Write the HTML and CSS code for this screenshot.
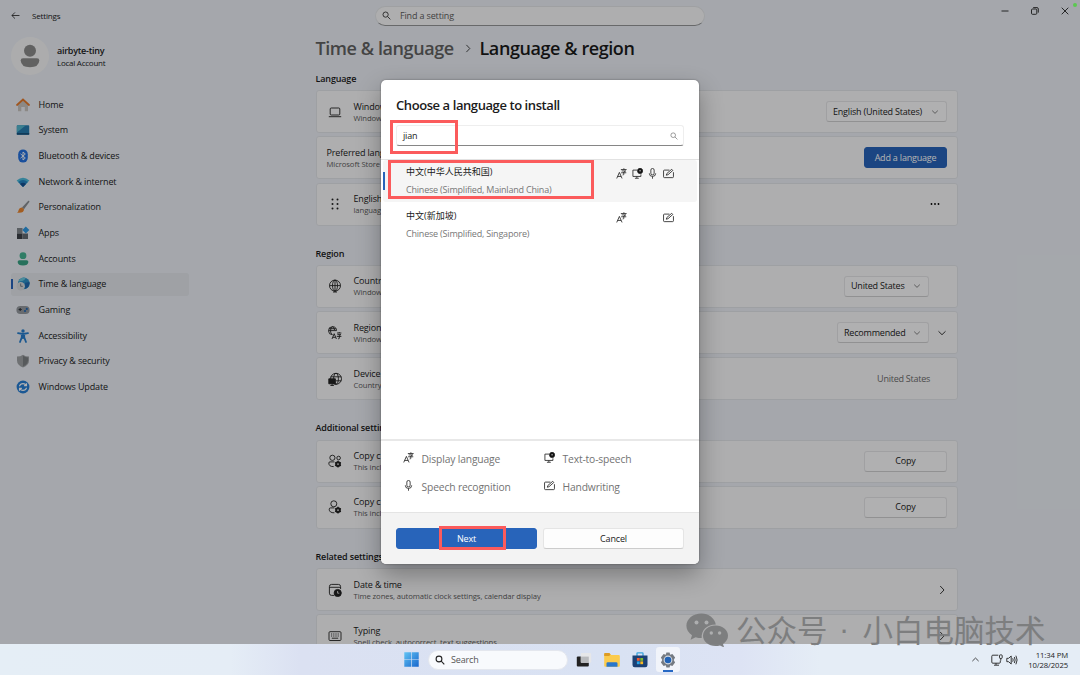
FILE: index.html
```html
<!DOCTYPE html>
<html lang="en">
<head>
  <meta charset="UTF-8">
  <title>Settings</title>
  <link rel="stylesheet" href="styles.css">
</head>
<body>
  <!-- shared icons -->
  <svg class="defs" width="0" height="0">
    <symbol id="i-search" viewBox="0 0 10 10"><circle cx="4" cy="4" r="2.9"/><path d="M6.2 6.2 9.3 9.3"/></symbol>
    <symbol id="i-down" viewBox="0 0 10 10"><path d="M1.5 3.3 5 6.7 8.5 3.3"/></symbol>
    <symbol id="i-right" viewBox="0 0 10 10"><path d="M3.2 1 7 5 3.2 9"/></symbol>
    <symbol id="i-display" viewBox="0 0 12 12"><path d="M.8 11.4 3.7 4.8 6.6 11.4M1.8 9.2H5.6M5.3 1.7H11.6M8.6.3V1.7M6.2 3.2H10.6L8.5 4.5V6.9Q8.5 7.7 7.2 7.6M5.6 5.2H11.2"/></symbol>
    <symbol id="i-tts" viewBox="0 0 12 12"><path d="M5.6 2.3H1V9.2H9.7V6.9M5.3 9.3V11M3.2 11.2H7.4"/><circle cx="8.8" cy="3.2" r="2.8" fill="#111"/><path d="M8.8 2.1V3.8" stroke="#fff"/></symbol>
    <symbol id="i-mic" viewBox="0 0 12 12"><rect x="4.2" y=".5" width="3.6" height="7" rx="1.8"/><path d="M2.5 5.8Q2.5 9.2 6 9.2T9.5 5.8M6 9.2V11.7"/></symbol>
    <symbol id="i-pen" viewBox="0 0 12 12"><path d="M7 2.3H1.6Q.6 2.3.6 3.2V9.6Q.6 10.5 1.600 10.5H10.4Q11.400 10.5 11.4 9.6V4.6M3.6 7.9 4.2 6 9.5 1.400 10.7 2.700 5.500 7.300Z"/></symbol>
  </svg>

  <div class="window">
    <header class="titlebar">
      <svg class="back line" viewBox="0 0 10 10"><path d="M9.4 5H1M4.4 1.6 1 5 4.4 8.4"/></svg>
      <span class="app-name">Settings</span>
      <div class="find"><svg class="line"><use href="#i-search"/></svg><span>Find a setting</span></div>
      <div class="controls">
        <svg class="line" viewBox="0 0 10 10"><path d="M1.5 5H8.5"/></svg>
        <svg class="line" viewBox="0 0 10 10"><rect x="1.5" y="3" width="5.3" height="5.3" rx="1"/><path d="M3.2 1.6H7Q8.3 1.6 8.3 3V6.6"/></svg>
        <svg class="line" viewBox="0 0 10 10"><path d="M1.7 1.7 8.3 8.3M8.3 1.7 1.7 8.3"/></svg>
      </div>
    </header>

    <div class="layout">
      <nav class="sidebar">
        <div class="account">
          <div class="avatar"><svg viewBox="0 0 38 38"><circle cx="19" cy="13.7" r="6" fill="#8c8c8c"/><path d="M12 21.3H26Q28.3 21.3 28.3 23.5Q28 30.2 19 30.2T9.7 23.5Q9.7 21.3 12 21.3Z" fill="#8c8c8c"/></svg></div>
          <div><div class="user">airbyte-tiny</div><div class="kind">Local Account</div></div>
        </div>
        <ul class="menu">
          <li><svg viewBox="0 0 14 14"><path d="M2 6.5 7 2 12 6.5V13.3H8.8V9H5.3V13.3H2Z" fill="#c9c5c1"/><path d="M1 7 7 1.5 13 7" fill="none" stroke="#e57a2c" stroke-width="1.7" stroke-linecap="round"/></svg><span>Home</span></li>
          <li><svg viewBox="0 0 14 14"><rect x=".8" y="2.3" width="12.4" height="9.4" rx=".8" fill="#277db0"/><path d="M.8 9.5V3Q.8 2.3 1.6 2.3H10Z" fill="#54b6cf"/><rect x=".8" y="10" width="12.4" height="1.7" fill="#19537f"/></svg><span>System</span></li>
          <li><svg viewBox="0 0 14 14"><rect x="2.2" y=".4" width="9.6" height="13.2" rx="4.8" fill="#2672e0"/><path d="M4.5 4.8 9.3 9 7 11V3L9.3 5 4.5 9.2" fill="none" stroke="#fff" stroke-width=".9"/></svg><span>Bluetooth &amp; devices</span></li>
          <li><svg viewBox="0 0 14 14"><path d="M.6 5.6Q7-.2 13.4 5.6L7 12Z" fill="#4dbbdc"/><path d="M2.2 7.1Q7 3 11.8 7.1L7 12Z" fill="#2486c5"/><path d="M4 9Q7 6.6 10 9L7 12Z" fill="#164f91"/></svg><span>Network &amp; internet</span></li>
          <li><svg viewBox="0 0 14 14"><path d="M6 7.4 12.3.8Q13.8.5 13.3 2L8 9.3Z" fill="#8b8f94"/><path d="M1 12.7Q2.4 12 2.6 10Q3.3 7.2 6 7.4L8 9.3Q8 13.6 1 12.7Z" fill="#ea8630"/></svg><span>Personalization</span></li>
          <li><svg viewBox="0 0 14 14"><path d="M1 2H6.5V7.5H1Z" fill="#83888e"/><path d="M1 7.5H6.5V13H1Z" fill="#3b4047"/><path d="M6.5 7.5H12V13H6.5Z" fill="#646a72"/><path d="M9.8.4 13.3 3.9 9.8 7.4 6.3 3.9Z" fill="#2d9ae6"/></svg><span>Apps</span></li>
          <li><svg viewBox="0 0 14 14"><circle cx="7" cy="3.7" r="3.4" fill="#45b392"/><path d="M3.4 8.3H10.6Q12.4 8.3 12.4 10Q12 13.6 7 13.6T1.6 10Q1.6 8.3 3.4 8.3Z" fill="#38a385"/></svg><span>Accounts</span></li>
          <li class="active"><svg viewBox="0 0 14 14"><circle cx="7.8" cy="6.3" r="5.9" fill="#2d91c7"/><path d="M3.5 2.5Q7-.6 9.7 1.2Q8 4 6.2 4.1T2.4 5Z" fill="#6cc9de"/><path d="M9 5.7 13.5 5Q14 9.8 9.2 12Z" fill="#2269af"/><circle cx="4.7" cy="9.2" r="4.2" fill="#d9dcdf"/><path d="M4.7 6.5V9.3H6.8" fill="none" stroke="#626a71" stroke-width=".8"/></svg><span>Time &amp; language</span></li>
          <li><svg viewBox="0 0 14 14"><rect x=".4" y="3" width="13.2" height="8" rx="4" fill="#969aa0"/><path d="M4.2 4.9V8.1M2.6 6.5H5.8" stroke="#353a40" stroke-width="1.2"/><circle cx="9" cy="8" r="1.1" fill="#2168b7"/><circle cx="10.8" cy="5.9" r="1.1" fill="#2168b7"/></svg><span>Gaming</span></li>
          <li><svg viewBox="0 0 14 14"><circle cx="7" cy="2" r="1.7" fill="#277fce"/><path d="M2 4.2 7 5 12 4.2M5.8 5V8.3L4 13M8.2 5V8.3L10 13M7 5V9" fill="none" stroke="#277fce" stroke-width="1.8" stroke-linecap="round"/></svg><span>Accessibility</span></li>
          <li><svg viewBox="0 0 14 14"><path d="M7 .7Q9.5 2.5 13 2.6V6.4Q13 11 7 13.4Q1 11 1 6.4V2.6Q4.5 2.5 7 .7Z" fill="#9fa2a5"/><path d="M7 1.8V12.4Q12 10 12 6.4V3.5Q9 3.2 7 1.8Z" fill="#7d8185"/></svg><span>Privacy &amp; security</span></li>
          <li><svg viewBox="0 0 14 14"><circle cx="7" cy="7" r="6.4" fill="#277ed5"/><path d="M3.4 6.2Q4.3 3.6 7 3.6Q9.2 3.6 10.4 5.4M10.5 3.2V5.6H8.1M10.6 7.8Q9.7 10.4 7 10.4Q4.8 10.4 3.6 8.6M3.5 10.8V8.4H5.9" fill="none" stroke="#fff" stroke-width="1.1"/></svg><span>Windows Update</span></li>
        </ul>
      </nav>

      <main class="content">
        <h1><span class="crumb">Time &amp; language</span><svg class="line"><use href="#i-right"/></svg><span class="page">Language &amp; region</span></h1>

        <h3 class="first">Language</h3>
        <section>
          <div class="card">
            <svg class="card-icon line" viewBox="0 0 14 14"><rect x="2.2" y="3" width="9.6" height="7" rx="1"/><path d="M.8 11.7H13.2"/></svg>
            <div class="text"><b>Windows</b><small>Windows</small></div>
            <div class="select wide">English (United States)<svg class="line"><use href="#i-down"/></svg></div>
          </div>
          <div class="card no-icon">
            <div class="text"><b>Preferred languages</b><small>Microsoft Store</small></div>
            <div class="button primary">Add a language</div>
          </div>
          <div class="card">
            <svg class="card-icon" viewBox="0 0 14 14" fill="#222"><circle cx="4.5" cy="2.5" r="1"/><circle cx="9.5" cy="2.5" r="1"/><circle cx="4.5" cy="7" r="1"/><circle cx="9.5" cy="7" r="1"/><circle cx="4.5" cy="11.5" r="1"/><circle cx="9.5" cy="11.5" r="1"/></svg>
            <div class="text"><b>English</b><small>language</small></div>
            <svg class="more" viewBox="0 0 10 10"><circle cx="1.5" cy="5" r=".9"/><circle cx="5" cy="5" r=".9"/><circle cx="8.5" cy="5" r=".9"/></svg>
          </div>
        </section>

        <h3>Region</h3>
        <section>
          <div class="card">
            <svg class="card-icon line" viewBox="0 0 14 14"><circle cx="7" cy="6.6" r="5.5"/><ellipse cx="7" cy="6.6" rx="2.5" ry="5.5"/><path d="M1.5 6.6H12.5M7 1V13M5 13H9"/></svg>
            <div class="text"><b>Country</b><small>Windows</small></div>
            <div class="select country">United States<svg class="line"><use href="#i-down"/></svg></div>
          </div>
          <div class="card">
            <svg class="card-icon line" viewBox="0 0 14 14"><path d="M8.5 4.6A4 4 0 1 0 4.5 8.7M.7 4.6H8.5M4.5.6Q2.5 2 2.5 4.6T4 8.6M4.5.6Q6.2 2 6.6 4M1.2 2.7H7.8M4 13 6.2 7.7 8.4 13M4.8 11.3H7.6M9 7H13.4M11.2 6V7M9.4 8.6H12.8L11.3 9.7V12.3Q11.3 13 10.2 12.8M8.8 10.4H13.4"/></svg>
            <div class="text"><b>Regional</b><small>Windows</small></div>
            <div class="select format">Recommended<svg class="line"><use href="#i-down"/></svg></div>
            <svg class="expand line"><use href="#i-down"/></svg>
          </div>
          <div class="card">
            <svg class="card-icon line" viewBox="0 0 14 14"><circle cx="8" cy="6.8" r="5.5"/><ellipse cx="8" cy="6.8" rx="2.4" ry="5.5"/><path d="M2.8 4.8H13.2M8 8.8H13.2"/><path d="M.8 6.8H7.4V11.8H.8Z" fill="#222"/><path d="M4.1 12V13.4M2.4 13.5H5.9"/></svg>
            <div class="text"><b>Device</b><small>Country</small></div>
            <span class="value">United States</span>
          </div>
        </section>

        <h3>Additional settings</h3>
        <section>
          <div class="card">
            <svg class="card-icon line" viewBox="0 0 14 14"><circle cx="4.4" cy="3.8" r="2.6"/><circle cx="10.6" cy="4" r="1.8"/><path d="M6.4 7.9H2Q.8 7.9.8 9Q.9 12.8 5.7 12.6"/><circle cx="10" cy="10.1" r="2" stroke-width="1.8"/><path d="M10 6.8V13.4M7.1 8.5 12.9 11.8M12.9 8.5 7.1 11.8" stroke-width="1.3"/><circle cx="10" cy="10.1" r=".9" fill="#ddd" stroke="none"/></svg>
            <div class="text"><b>Copy c</b><small>This incl</small></div>
            <div class="button">Copy</div>
          </div>
          <div class="card">
            <svg class="card-icon line" viewBox="0 0 14 14"><circle cx="5.8" cy="3.8" r="3"/><path d="M6.4 7.9H2.6Q1.2 7.9 1.2 9.2Q1.2 12.9 6.4 12.8"/><circle cx="10" cy="10.1" r="2" stroke-width="1.8"/><path d="M10 6.8V13.4M7.1 8.5 12.9 11.8M12.9 8.5 7.1 11.8" stroke-width="1.3"/><circle cx="10" cy="10.1" r=".9" fill="#ddd" stroke="none"/></svg>
            <div class="text"><b>Copy c</b><small>This incl</small></div>
            <div class="button">Copy</div>
          </div>
        </section>

        <h3>Related settings</h3>
        <section>
          <div class="card">
            <svg class="card-icon line" viewBox="0 0 14 14"><path d="M6 12.4H3.6Q1.4 12.4 1.4 10.2V3.6Q1.4 1.4 3.6 1.4H10.4Q12.6 1.4 12.6 3.6V6M1.4 4.3H12.6"/><circle cx="9.7" cy="10" r="3.6" fill="#222"/><path d="M9.6 8V10.2H11.3" stroke="#ddd"/></svg>
            <div class="text"><b>Date &amp; time</b><small>Time zones, automatic clock settings, calendar display</small></div>
            <svg class="go line"><use href="#i-right"/></svg>
          </div>
          <div class="card">
            <svg class="card-icon line" viewBox="0 0 14 14"><rect x="1" y="2.7" width="12" height="8.8" rx="1"/><path d="M3 5H11M3 7H11" stroke-dasharray="1.2 1"/><path d="M3.8 9.2H10.2"/></svg>
            <div class="text"><b>Typing</b><small>Spell check, autocorrect, text suggestions</small></div>
            <svg class="go line"><use href="#i-right"/></svg>
          </div>
        </section>
      </main>
    </div>

    <div class="backdrop">
      <div class="dialog">
        <div class="dialog-head">
          <h2>Choose a language to install</h2>
          <div class="lang-search"><span>jian</span><svg class="line"><use href="#i-search"/></svg></div>
        </div>
        <div class="results">
          <div class="result selected">
            <div><div class="native">中文(中华人民共和国)</div><div class="english">Chinese (Simplified, Mainland China)</div></div>
            <div class="features">
              <svg class="line"><use href="#i-display"/></svg><svg class="line"><use href="#i-tts"/></svg><svg class="line"><use href="#i-mic"/></svg><svg class="line"><use href="#i-pen"/></svg>
            </div>
          </div>
          <div class="result">
            <div><div class="native">中文(新加坡)</div><div class="english">Chinese (Simplified, Singapore)</div></div>
            <div class="features">
              <svg class="line"><use href="#i-display"/></svg><i></i><i></i><svg class="line"><use href="#i-pen"/></svg>
            </div>
          </div>
        </div>
        <div class="legend">
          <div><svg class="line"><use href="#i-display"/></svg><span>Display language</span></div>
          <div><svg class="line"><use href="#i-tts"/></svg><span>Text-to-speech</span></div>
          <div><svg class="line"><use href="#i-mic"/></svg><span>Speech recognition</span></div>
          <div><svg class="line"><use href="#i-pen"/></svg><span>Handwriting</span></div>
        </div>
        <div class="dialog-foot">
          <div class="next">Next</div>
          <div class="cancel">Cancel</div>
        </div>
        <div class="mark mark-search"></div>
        <div class="mark mark-result"></div>
        <div class="mark mark-next"></div>
      </div>
    </div>
    <div class="dot"></div>
  </div>

  <footer class="taskbar">
    <div class="apps">
      <svg class="start" viewBox="0 0 16 16"><defs><linearGradient id="win" x2="1" y2="1"><stop stop-color="#62c4f4"/><stop offset="1" stop-color="#1766cc"/></linearGradient></defs><path d="M.3.3H7.6V7.6H.3ZM8.3.3H15.7V7.6H8.3ZM.3 8.3H7.6V15.7H.3ZM8.3 8.3H15.7V15.7H8.3Z" fill="url(#win)"/></svg>
      <div class="task-search"><svg class="line"><use href="#i-search"/></svg><span>Search</span></div>
      <svg class="app" viewBox="0 0 16 16"><rect x=".8" y="4.6" width="12" height="10" rx="1" fill="#222"/><rect x="4.8" y="1" width="10.4" height="9.8" rx="1" fill="#e6e7e9"/><path d="M4.8 4.6H12.8V10.8H4.8Z" fill="#b9bbbe"/></svg>
      <svg class="app" viewBox="0 0 16 16"><path d="M.2 2Q.2 1 1.2 1H5.3L7 3H14.8Q15.8 3 15.8 4V13.7Q15.8 14.7 14.8 14.7H1.2Q.2 14.7.2 13.7Z" fill="#fbcb4d"/><path d="M.2 4V2Q.2 1 1.2 1H5.3L6.6 2.5 5.2 4Z" fill="#dc9b25"/><path d="M2.5 14.8V11.5Q2.5 10.2 3.8 10.2H12.2Q13.5 10.2 13.5 11.5V14.8Z" fill="#2876cb"/></svg>
      <svg class="app" viewBox="0 0 16 16"><path d="M5 4V1.5Q5 .9 5.6.9H10.4Q11 .9 11 1.5V4" fill="none" stroke="#3aa4dc" stroke-width="1.3"/><path d="M.5 3.4H15.5V13Q15.5 15.2 13.3 15.2H2.7Q.5 15.2.5 13Z" fill="#1b4175"/><path d="M4.9 6H7.7V8.8H4.9Z" fill="#f15a32"/><path d="M8.3 6H11.1V8.8H8.3Z" fill="#80bd30"/><path d="M4.9 9.4H7.7V12.2H4.9Z" fill="#2aa5e8"/><path d="M8.3 9.4H11.1V12.2H8.3Z" fill="#fbba20"/></svg>
      <div class="running"><svg class="app" viewBox="0 0 16 16"><path d="M6.4.6H9.6L10.2 2.8 12.4 1.9 15.1 5.6 13.7 8 15.1 10.4 12.4 14.1 10.2 13.2 9.6 15.4H6.4L5.8 13.2 3.6 14.1.9 10.4 2.3 8 .9 5.6 3.6 1.9 5.8 2.8Z" fill="#747a81"/><circle cx="8" cy="8" r="4.4" fill="#d4dae2"/><circle cx="8" cy="8" r="3.3" fill="#2162b4"/></svg></div>
    </div>
    <div class="tray">
      <svg class="up line" viewBox="0 0 10 10"><path d="M1.5 6.8 5 3.4 8.5 6.8"/></svg>
      <svg class="net line" viewBox="0 0 12 12"><path d="M7.3 1.2H1.8Q.8 1.2.8 2.2V8.2Q.8 9.2 1.8 9.2H8.4Q9.3 9.2 9.3 8.2V6.5M5 9.2V11M3 11.2H8M9.8 4.3V6.5"/><rect x="8.5" y=".9" width="2.7" height="3.5" rx=".7"/></svg>
      <svg class="vol line" viewBox="0 0 12 12"><path d="M.8 4.3H2.6L5.2 2V10L2.6 7.7H.8ZM6.7 4.3Q7.7 6 6.7 7.7M8.3 3Q10 6 8.3 9M9.9 1.7Q12.3 6 9.9 10.3"/></svg>
      <div class="clock">11:34 PM<br>10/28/2025</div>
    </div>
  </footer>

  <div class="watermark">
    <svg viewBox="0 0 42 34"><path d="M15.5.5C7 .5.4 6 .4 12.8c0 3.9 2.1 7.2 5.6 9.5L4.6 26.8l5-2.6c2 .6 4 .9 6.1.9C15 17 21 11.5 29.8 11.4 28.5 5 22.6.5 15.5.5Z"/><path d="M29.5 12.5c-7 0-12.5 4.6-12.5 10.3s5.5 10.3 12.5 10.3c1.6 0 3.1-.2 4.5-.7l4.1 2.1-1.1-3.6c3.1-2 5-4.8 5-8.1 0-5.7-5.5-10.3-12.5-10.3Z"/><g fill="#adaeaf"><circle cx="10.5" cy="9.5" r="2"/><circle cx="20.5" cy="9.5" r="2"/><circle cx="25.3" cy="20" r="1.7"/><circle cx="33.6" cy="20" r="1.7"/></g></svg>
    <span>公众号</span><span class="sep">·</span><span>小白电脑技术</span>
  </div>
</body>
</html>
```

FILE: styles.css
```css
* {
  box-sizing: border-box;
}
body {
  margin: 0;
  width: 1080px;
  height: 675px;
  overflow: hidden;
  position: relative;
  font-family: "Open Sans", "Noto Sans CJK SC", sans-serif;
  font-size: 9px;
  line-height: 12px;
  letter-spacing: -0.15px;
  color: #1b1b1b;
}
.defs {
  position: absolute;
}
svg {
  display: block;
  flex: none;
}
.line {
  fill: none;
  stroke: #222;
  stroke-width: 0.9;
}
.window {
  position: relative;
  height: 644px;
  overflow: hidden;
  background: #ecf0f7;
}

/* title bar */
.titlebar {
  display: flex;
  align-items: center;
  height: 31px;
  padding-left: 11px;
}
.back {
  width: 9px;
  height: 9px;
}
.app-name {
  width: 343px;
  margin-left: 12px;
  font-size: 8px;
}
.find {
  display: flex;
  align-items: center;
  gap: 9px;
  width: 330px;
  height: 20px;
  padding-left: 6px;
  border: 1px solid #e4e6e9;
  border-bottom-color: #969799;
  border-radius: 10px;
  background: #fafafb;
  color: #5c5c5c;
}
.find svg {
  width: 9px;
  height: 9px;
}
.controls {
  display: flex;
  gap: 20px;
  margin: -10px 10px 0 auto;
}
.controls svg {
  width: 10px;
  height: 10px;
}

/* sidebar */
.layout {
  display: flex;
}
.sidebar {
  width: 315.5px;
  padding-left: 11px;
}
.account {
  display: flex;
  align-items: center;
  gap: 8px;
  height: 50px;
  font-size: 8px;
  letter-spacing: -0.25px;
}
.avatar {
  width: 38px;
  height: 38px;
  border-radius: 50%;
  background: #f7f7f8;
}
.user {
  padding-top: 1px;
  font-size: 9px;
  font-weight: 600;
}
.kind {
  line-height: 11px;
}
.menu {
  margin: 12px 0 0;
  padding: 0;
  list-style: none;
}
.menu li {
  display: flex;
  align-items: center;
  gap: 8.5px;
  width: 178px;
  height: 23px;
  margin-bottom: 2.7px;
  padding-left: 5px;
  border-radius: 3px;
}
.menu svg {
  width: 14px;
  height: 14px;
}
.menu .active {
  background: linear-gradient(90deg, #2864ba 0 2px, transparent 2px) 0 50% / 100% 10px no-repeat, #e4e7ed;
}

/* content */
.content {
  width: 642.5px;
}
h1 {
  display: flex;
  align-items: center;
  height: 34px;
  margin: 0;
  font-size: 18px;
  line-height: 24px;
  font-weight: 600;
  letter-spacing: -0.42px;
}
h1 .crumb {
  width: 147px;
  color: #626262;
}
h1 .page {
  margin-left: 7px;
}
h1 svg {
  width: 10px;
  height: 9px;
  stroke: #555;
  stroke-width: 1.4;
}
h3 {
  height: 39.2px;
  margin: 0;
  padding-top: 22px;
  font-size: 9px;
  font-weight: 600;
}
h3.first {
  height: 25px;
  padding-top: 7.5px;
}
section {
  display: flex;
  flex-direction: column;
  gap: 3.3px;
}
.card {
  display: flex;
  align-items: center;
  height: 43px;
  padding: 0 10px 0 11px;
  border: 1px solid #e3e5ea;
  border-radius: 3px;
  background: #fafafb;
}
.card-icon {
  width: 14px;
  height: 14px;
  margin-right: 12px;
}
.card.no-icon {
  padding-left: 10px;
}
.text {
  flex: 1;
  white-space: nowrap;
}
.text b {
  display: block;
  font-weight: 400;
}
.text small {
  display: block;
  font-size: 7.7px;
  line-height: 10px;
  letter-spacing: -0.1px;
  color: #5d5d5d;
}
.select,
.button {
  display: flex;
  align-items: center;
  justify-content: space-between;
  height: 21px;
  padding: 0 7px 0 6px;
  border: 1px solid #e6e6e8;
  border-bottom-color: #d0d0d2;
  border-radius: 3px;
  background: #fdfdfe;
  letter-spacing: -0.2px;
}
.select svg {
  width: 8px;
  height: 8px;
  stroke: #555;
}
.wide {
  width: 121px;
}
.country {
  width: 85px;
  margin-right: 18px;
}
.format {
  width: 92px;
}
.expand {
  width: 10px;
  height: 10px;
  margin-left: 8px;
}
.button {
  justify-content: center;
  width: 83px;
  padding: 0;
}
.primary {
  border-color: #2864ba;
  background: #2864ba;
  color: #fff;
}
.more {
  width: 10px;
  height: 10px;
  margin-right: 7px;
}
.value {
  margin-right: 17px;
  letter-spacing: -0.25px;
  color: #6d6d6d;
}
.go {
  width: 10px;
  height: 10px;
}

/* dialog */
.backdrop {
  position: absolute;
  inset: 0;
  display: flex;
  align-items: center;
  justify-content: center;
  background: rgba(0, 0, 0, 0.3);
}
.dialog {
  position: relative;
  width: 318px;
  height: 484px;
  border-radius: 5px;
  background: #fff;
  box-shadow: 0 10px 24px rgba(0, 0, 0, 0.32), 0 0 2px rgba(0, 0, 0, 0.4);
}
.dialog-head {
  height: 80px;
  padding: 16px 15px 0;
  border-bottom: 1px solid #e2e2e2;
}
h2 {
  margin: 0 0 11px;
  font-size: 13px;
  line-height: 18px;
  font-weight: 600;
  letter-spacing: -0.42px;
}
.lang-search {
  display: flex;
  align-items: center;
  justify-content: space-between;
  height: 21px;
  padding: 0 5px 0 6px;
  border: 1px solid #eee;
  border-bottom-color: #868686;
  border-radius: 3px;
}
.lang-search svg {
  width: 8px;
  height: 8px;
  stroke: #777;
}
.results {
  height: 281px;
  border-bottom: 2px solid #e8e8e8;
}
.result {
  display: flex;
  justify-content: space-between;
  height: 42px;
  margin: 0 2px 2px;
  padding: 6px 22px 0 23px;
  border-radius: 3px;
}
.selected {
  background: linear-gradient(90deg, #2864ba 0 2px, transparent 2px) 0 50% / 100% 18px no-repeat, #f5f5f5;
}
.native {
  letter-spacing: 0;
}
.english {
  margin-top: 6px;
  letter-spacing: -0.2px;
  color: #777;
}
.features {
  display: grid;
  grid-template-columns: repeat(4, 12px);
  gap: 3.6px;
  padding-top: 2px;
}
.features svg,
.legend svg {
  width: 11px;
  height: 11px;
}
.legend {
  display: grid;
  grid-template-columns: 141px 1fr;
  grid-template-rows: 28px 28px;
  height: 71px;
  padding: 4px 22px 0;
  font-size: 10.3px;
  color: #737373;
}
.legend div {
  display: flex;
  align-items: center;
  gap: 7.5px;
}
.legend svg {
  margin-bottom: 3px;
}
.dialog-foot {
  display: flex;
  gap: 6px;
  height: 52px;
  padding: 15px 15px;
  border-top: 1px solid #e4e4e4;
  border-radius: 0 0 5px 5px;
  background: #f3f3f3;
}
.next,
.cancel {
  flex: 1;
  height: 21px;
  border: 1px solid #2864ba;
  border-radius: 3px;
  line-height: 19px;
  text-align: center;
  background: #2864ba;
  color: #fff;
}
.cancel {
  border-color: #e5e5e5;
  border-bottom-color: #ccc;
  background: #fdfdfd;
  color: #1b1b1b;
}

/* red highlight frames */
.mark {
  position: absolute;
  border: 3px solid #fb5b5c;
}
.mark-search {
  left: 9px;
  top: 40px;
  width: 68px;
  height: 34px;
}
.mark-result {
  left: 7px;
  top: 80px;
  width: 206px;
  height: 39px;
}
.mark-next {
  left: 58px;
  top: 446px;
  width: 67px;
  height: 24px;
}
.dot {
  position: absolute;
  top: 3px;
  right: 3px;
  width: 4px;
  height: 4px;
  border-radius: 50%;
  background: #5bc850;
}

/* taskbar */
.taskbar {
  position: relative;
  height: 31px;
  background: linear-gradient(90deg, #e5eef6 0, #e5edf6 230px, #dbe1f2 300px, #d9e2f3 620px, #dde3f4 740px, #e5edf6 820px);
}
.apps {
  display: flex;
  align-items: center;
  height: 31px;
  padding-left: 404px;
}
.start {
  width: 15px;
  height: 15px;
}
.task-search {
  display: flex;
  align-items: center;
  gap: 6px;
  width: 140px;
  height: 20px;
  margin: 0 7.5px 0 9px;
  padding-left: 6px;
  border: 1px solid #e4e7ee;
  border-radius: 10px;
  background: #f8fafd;
  color: #555;
}
.task-search svg {
  width: 10px;
  height: 10px;
  stroke-width: 1.1;
}
.app {
  width: 16px;
  height: 16px;
  margin-right: 12.3px;
}
.running {
  display: flex;
  align-items: center;
  justify-content: center;
  width: 24px;
  height: 25px;
  margin-left: -4px;
  border-radius: 3px;
  background: linear-gradient(#2668c4, #2668c4) 50% 100% / 10px 2px no-repeat, #f1f4fa;
}
.running .app {
  margin: 0;
}
.tray {
  position: absolute;
  top: 0;
  right: 12px;
  display: flex;
  align-items: center;
  height: 31px;
  font-size: 7.7px;
  letter-spacing: -0.1px;
}
.up {
  width: 9px;
  height: 9px;
  margin-right: 11px;
}
.net,
.vol {
  width: 12px;
  height: 12px;
  margin-right: 3px;
}
.clock {
  width: 47px;
  line-height: 10px;
  text-align: right;
}

/* watermark */
.watermark {
  position: absolute;
  left: 686px;
  top: 612px;
  display: flex;
  align-items: center;
  height: 35px;
  font-family: "Noto Sans CJK SC", sans-serif;
  font-size: 30.5px;
  line-height: 35px;
  letter-spacing: 0;
  color: #7b7c7d;
  opacity: 0.95;
}
.watermark svg {
  width: 42px;
  height: 34px;
  margin-right: 8px;
  fill: #7b7c7d;
}
.watermark .sep {
  width: 35px;
  padding-right: 2px;
  font-family: "Liberation Sans", sans-serif;
  text-align: center;
}
```
